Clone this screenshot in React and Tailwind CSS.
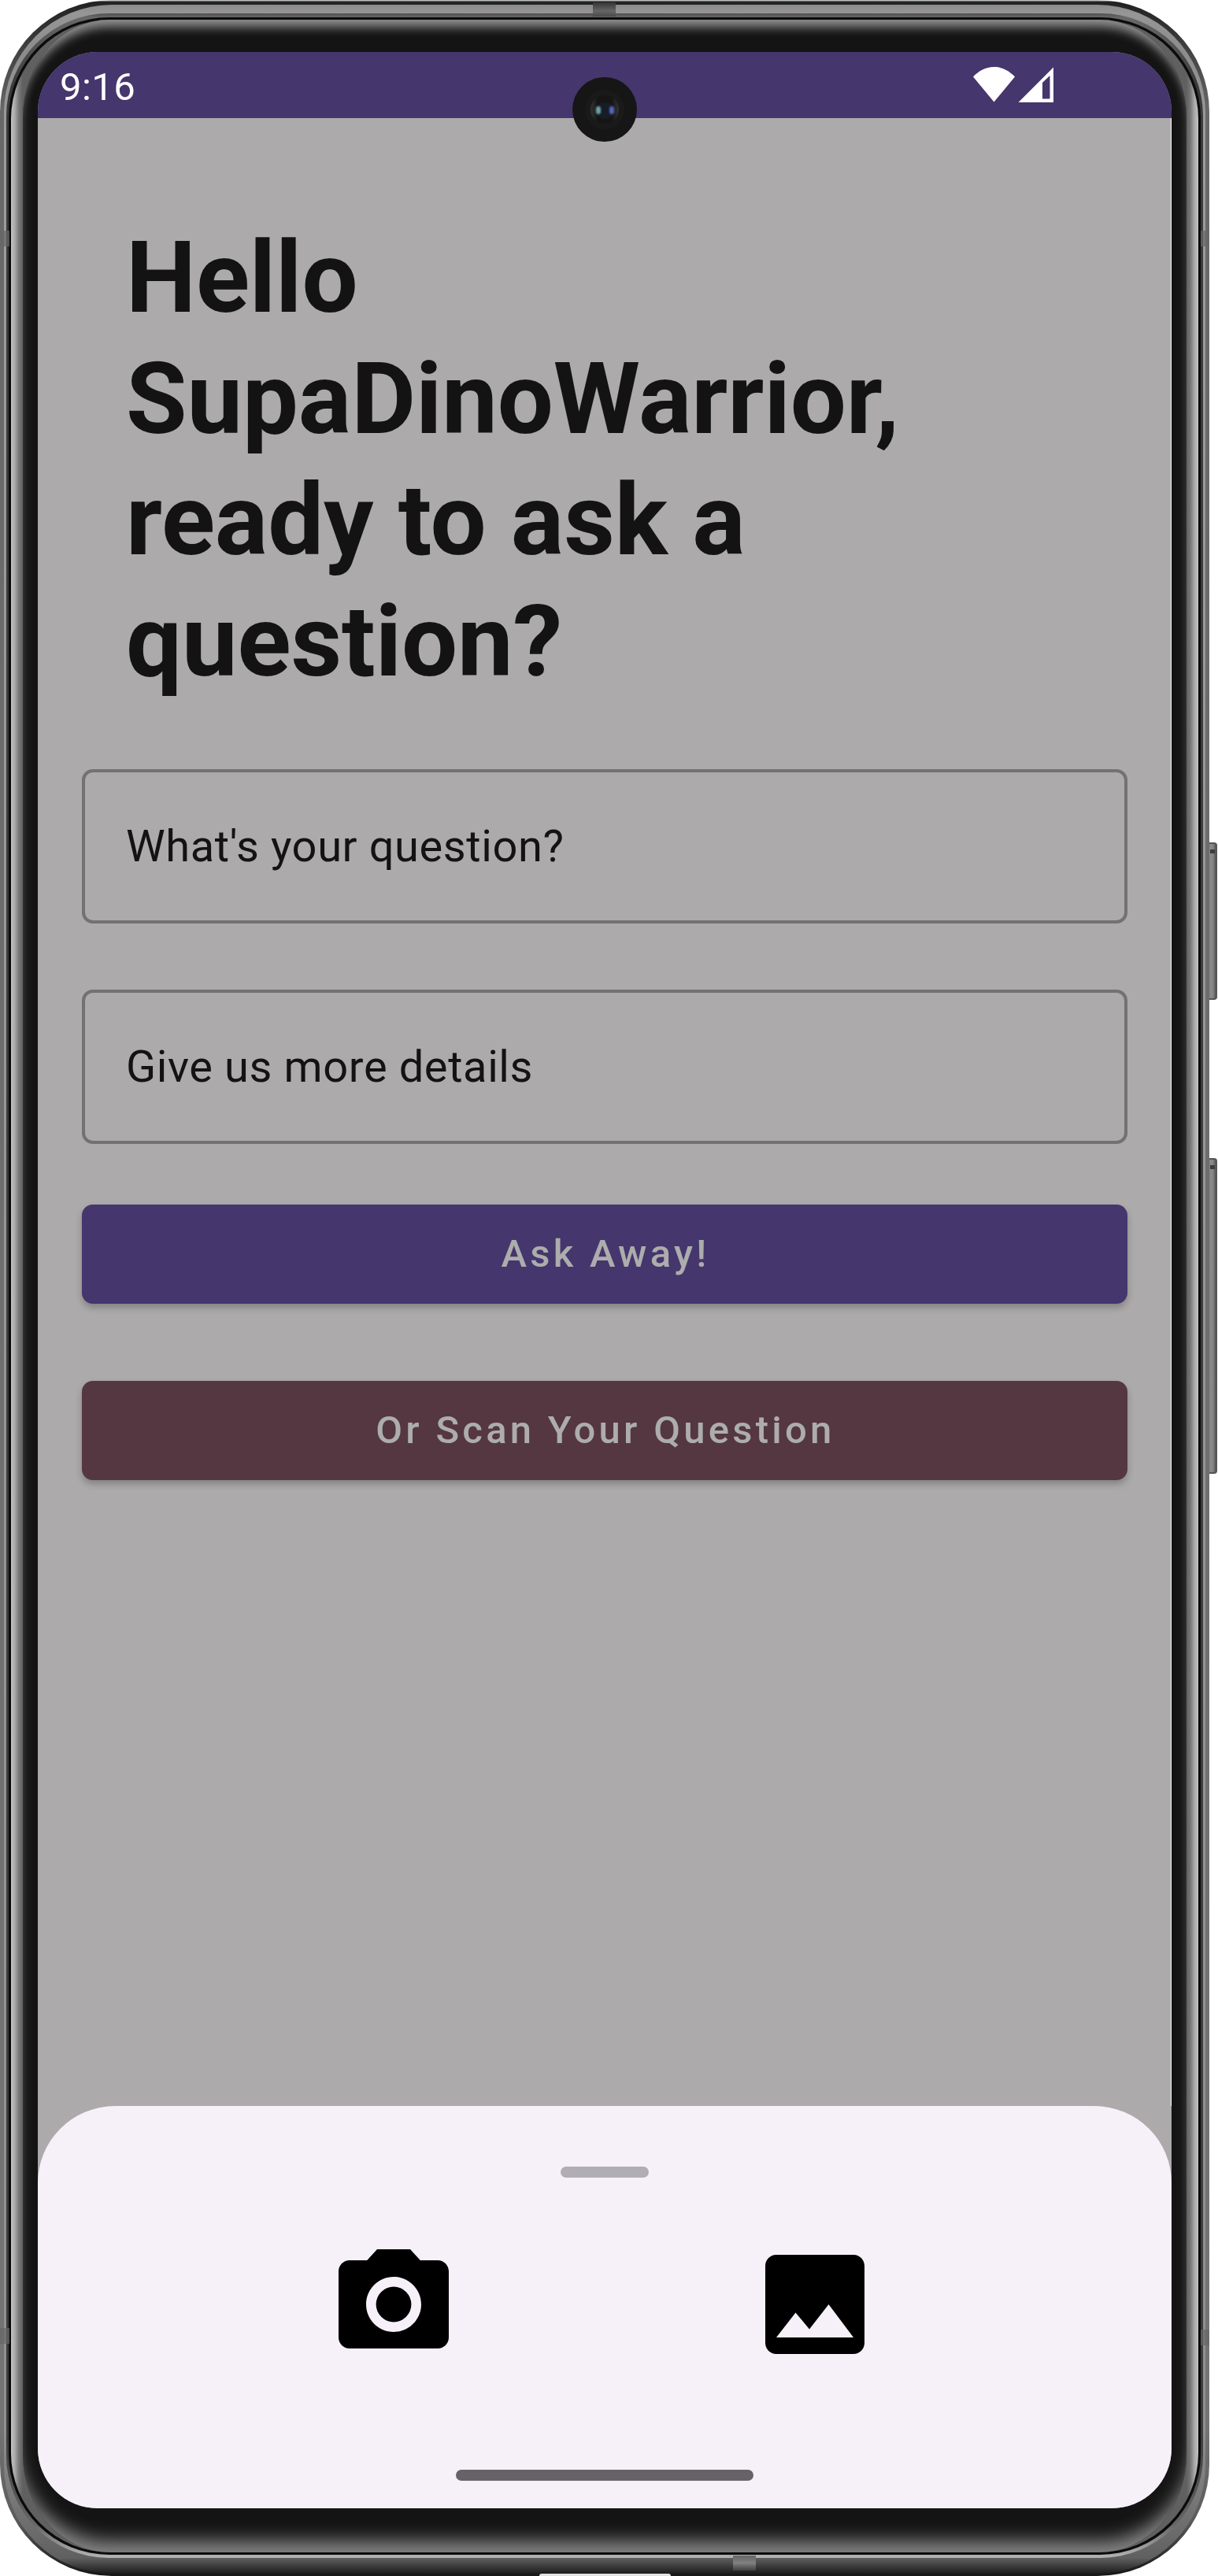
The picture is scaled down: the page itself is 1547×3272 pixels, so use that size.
import React from "react";

function StatusIcons() {
  return (
    <svg className="mt-[19px] h-[45px] w-[102px]" viewBox="0 0 102 45" fill="#fff">
      <path d="M0 12.5C7 5 16 0 26.500 0S46 5 53 12.500L26.500 44.500Z" />
      <path fillRule="evenodd" d="M57.500 45 102 .500V45ZM88 20v20.500h9.500V11Z" />
    </svg>
  );
}

function StatusBar() {
  return (
    <header className="flex h-[84px] shrink-0 items-start justify-between bg-[#45366d] pr-[150px] pl-7">
      <span className="mt-[16px] text-[49px] leading-[57px] tracking-[0.4px] text-white">9:16</span>
      <StatusIcons />
    </header>
  );
}

function Field({ label }) {
  return (
    <div className="flex h-[196px] items-center rounded-[14px] border-4 border-[#737173] px-[52px] text-[56px] leading-[84px] tracking-[0.6px] text-[#131314]">
      {label}
    </div>
  );
}

function ActionButton({ className, children }) {
  return (
    <button
      className={
        "flex h-[126px] w-full items-center justify-center rounded-[14px] pl-[2px] text-[49px] font-medium leading-[56px] tracking-[4.27px] text-[#acadac] shadow-[0_5px_9px_rgba(0,0,0,0.24)] " +
        className
      }
    >
      {children}
    </button>
  );
}

function PickerSheet() {
  return (
    <section className="flex h-[511px] shrink-0 flex-col rounded-t-[98px] bg-[#f6f1f9]">
      <div className="mx-auto mt-[77px] h-[14px] w-28 rounded-full bg-[#b0adb5]" />
      <div className="mt-[77px] flex justify-evenly pr-px">
        <svg className="size-[168px]" viewBox="0 0 24 24">
          <circle cx="12" cy="12" r="3.200" />
          <path d="M9 2 7.170 4H4c-1.100 0-2 .9-2 2v12c0 1.100.9 2 2 2h16c1.100 0 2-.9 2-2V6c0-1.100-.9-2-2-2h-3.170L15 2H9zm3 15c-2.760 0-5-2.240-5-5s2.240-5 5-5 5 2.240 5 5-2.240 5-5 5z" />
        </svg>
        <svg className="size-[168px]" viewBox="0 0 24 24">
          <path d="M21 19V5c0-1.100-.9-2-2-2H5c-1.100 0-2 .9-2 2v14c0 1.100.9 2 2 2h14c1.100 0 2-.9 2-2zM8.500 13.500l2.500 3.010L14.500 12l4.500 6H5l3.500-4.500z" />
        </svg>
      </div>
      <div className="mx-auto mt-auto mb-[35px] h-[14px] w-[378px] rounded-full bg-[#656367]" />
    </section>
  );
}

function Screen() {
  return (
    <div className="flex h-[3120px] w-[1440px] flex-col overflow-hidden rounded-[76px] bg-[#acaaab]">
      <StatusBar />
      <main className="flex grow flex-col border-r border-white px-14 pt-[126px] pr-[55px]">
        <h1 className="w-[1216px] pl-14 text-[126px] font-bold leading-[154px] tracking-[-0.08px] text-[#131314]">
          Hello SupaDinoWarrior, ready to ask a question?
        </h1>
        <div className="mt-[85px] flex flex-col gap-[84px]">
          <Field label="What's your question?" />
          <Field label="Give us more details" />
        </div>
        <div className="mt-[77px] flex flex-col gap-[98px]">
          <ActionButton className="bg-[#45366d]">Ask Away!</ActionButton>
          <ActionButton className="bg-[#553741]">Or Scan Your Question</ActionButton>
        </div>
      </main>
      <PickerSheet />
    </div>
  );
}

function FrontCamera() {
  return (
    <div className="absolute top-[98px] left-[727px] flex size-[82px] items-center justify-center rounded-full bg-[#161616]">
      <div className="flex size-[50px] items-center justify-center rounded-full bg-[#1a1a1a]">
        <div className="flex size-9 items-center justify-center rounded-full bg-[linear-gradient(90deg,#343434,#151515_25%,#151515_75%,#343434)]">
          <div className="mt-[2px] flex h-[21px] w-[23px] items-center justify-between rounded-full bg-[#171c26]">
            <div className="h-[10px] w-[6px] rounded-full bg-[#6ba3a5] blur-[1px]" />
            <div className="h-[10px] w-[6px] rounded-full bg-[#5567b5] blur-[1px]" />
          </div>
        </div>
      </div>
    </div>
  );
}

function SideKey({ className }) {
  return (
    <div
      className={
        "absolute left-[1533px] w-[13px] rounded-r-[4px] border-y-2 border-r-2 border-[#555] bg-[linear-gradient(90deg,#4a4a4a,#8a8a8a_35%,#858585_70%,#555)] " +
        className
      }
    >
      <div className="mt-[7px] ml-[4px] h-[5px] w-[6px] bg-[#3c3c3c]" />
    </div>
  );
}

export default function App() {
  return (
    <div className="relative h-[3272px] w-[1547px] overflow-hidden bg-white font-['Roboto',sans-serif]">
      <SideKey className="top-[1070px] h-[200px]" />
      <SideKey className="top-[1471px] h-[401px]" />
      <div className="relative h-[3272px] w-[1536px] rounded-[142px] bg-[linear-gradient(180deg,#b9bdba_0,#b9bdba_1px,#202220_2px,#242424_8px,#686868_140px,#747474_3080px,#5c5c5c_3200px,#181818_3270px)] px-[5px] pt-[6px] pb-[3px]">
        <div className="h-[3263px] rounded-[137px] bg-[linear-gradient(180deg,#8b8b8b_0,#969696_11px,#8c8c8c_60px,#9c9c9c_160px,#909090_3080px,#6a6a6a_3215px,#606060_3243px,#1c1c1c_3263px)] px-[3px] pt-[11px] pb-[20px]">
          <div className="h-[3232px] rounded-[130px] bg-[linear-gradient(180deg,#505050_0,#686868_5px,#3a3a3a_90px,#3c3c3c_3080px,#666_3190px,#b4b4b4_3232px)] px-[3px] pt-[5px] pb-[4px]">
            <div className="h-[3223px] rounded-[128px] bg-[#0b0b0b] px-[3px] pt-[3px] pb-[3px]">
              <div className="h-[3217px] rounded-[126px] bg-[linear-gradient(90deg,#c4c4c4_0,#a8a8a8_5px,#777_10px,#606060_15px,#606060_1493px,#777_1498px,#a8a8a8_1503px,#c4c4c4_1508px)] px-[15px]">
                <div className="flex h-[3217px] justify-center rounded-[110px/124px] bg-[#141414] pt-[41px] shadow-[inset_0_17px_13px_-8px_#929292,inset_0_-25px_22px_-10px_#848484]">
                  <Screen />
                </div>
              </div>
            </div>
          </div>
        </div>
        <div className="absolute top-[3px] left-[753px] h-[18px] w-[29px] bg-[linear-gradient(180deg,#343434,#666_60%,#4a4a4a)]" />
        <div className="absolute top-[3246px] left-[931px] h-[19px] w-[29px] bg-[linear-gradient(180deg,#666,#808080_50%,#404040)]" />
        <div className="absolute top-[293px] left-0 h-5 w-[12px] bg-[#666]/70" />
        <div className="absolute top-[2957px] left-0 h-5 w-[12px] bg-[#666]/70" />
        <div className="absolute top-[293px] right-0 h-5 w-[11px] bg-[#666]/70" />
        <div className="absolute top-[2959px] right-0 h-5 w-[11px] bg-[#666]/70" />
        <div className="absolute top-[3269px] left-[685px] h-[3px] w-[167px] rounded-t-full bg-[#e4e2e2]" />
        <FrontCamera />
      </div>
    </div>
  );
}
